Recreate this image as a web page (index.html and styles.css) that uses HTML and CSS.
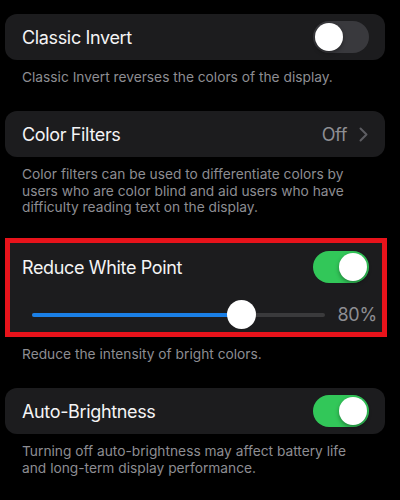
FILE: index.html
```html
<!DOCTYPE html>
<html lang="en">
<head>
    <meta charset="UTF-8">
    <meta name="viewport" content="width=device-width, initial-scale=1.0">
    <title>Display &amp; Text Size</title>
    <link rel="stylesheet" href="styles.css">
</head>
<body>
    <main class="settings">
        <section class="group">
            <div class="cell">
                <span class="cell-title">Classic Invert</span>
                <span class="switch"><span class="knob"></span></span>
            </div>
            <p class="footnote">Classic Invert reverses the colors of the display.</p>
        </section>

        <section class="group">
            <div class="cell">
                <span class="cell-title">Color Filters</span>
                <span class="cell-detail">
                    Off
                    <svg class="chevron" width="9" height="15" viewBox="0 0 9 15">
                        <polyline points="1.5,1.5 7.5,7.5 1.5,13.5" fill="none" stroke="#5d5d62" stroke-width="2" stroke-linecap="round" stroke-linejoin="round"/>
                    </svg>
                </span>
            </div>
            <p class="footnote">Color filters can be used to differentiate colors by users who are color blind and aid users who have difficulty reading text on the display.</p>
        </section>

        <section class="group">
            <div class="cell cell-marked">
                <div class="cell-row">
                    <span class="cell-title">Reduce White Point</span>
                    <span class="switch on"><span class="knob"></span></span>
                </div>
                <div class="slider-row">
                    <div class="slider">
                        <div class="slider-fill" style="width: 71.5%"></div>
                        <span class="slider-thumb" style="left: 71.5%"></span>
                    </div>
                    <span class="slider-value">80%</span>
                </div>
            </div>
            <p class="footnote">Reduce the intensity of bright colors.</p>
        </section>

        <section class="group">
            <div class="cell">
                <span class="cell-title">Auto-Brightness</span>
                <span class="switch on"><span class="knob"></span></span>
            </div>
            <p class="footnote">Turning off auto-brightness may affect battery life and long-term display performance.</p>
        </section>
    </main>
</body>
</html>
```

FILE: styles.css
```css
body {
    margin: 0;
    padding-top: 14px;
    background-color: #000;
    font-family: Inter, "Noto Sans", sans-serif;
    color: #fff;
}

.settings {
    width: 400px;
}

.cell {
    display: flex;
    align-items: center;
    justify-content: space-between;
    height: 46px;
    margin: 0 15px 0 5px;
    padding: 0 16px 0 17px;
    background-color: #1c1c1e;
    border-radius: 12px;
}

.cell-title {
    font-size: 18px;
    letter-spacing: -0.35px;
    color: #f4f4f5;
}

.cell-detail {
    display: flex;
    align-items: center;
    gap: 12px;
    font-size: 18px;
    letter-spacing: -0.35px;
    color: #8e8e93;
    padding-right: 1px;
}

.chevron {
    display: block;
}

.footnote {
    margin: 0 15px 25.5px 5px;
    padding: 9px 17px 0;
    font-size: 13.75px;
    line-height: 16.5px;
    color: #8d8d92;
}

/* highlighted cell with the red frame round it */
.cell-marked {
    display: block;
    height: 89px;
    margin: -3px 13px 0 5px;
    padding: 0;
    border: 5px solid #e8131b;
    border-radius: 0;
}

.cell-row {
    display: flex;
    align-items: center;
    justify-content: space-between;
    height: 48px;
    padding: 0 13px 0 12px;
}

.slider-row {
    display: flex;
    align-items: center;
    height: 41px;
    padding: 6px 5px 0 22px;
    box-sizing: border-box;
}

.slider {
    position: relative;
    flex: 1;
    height: 4px;
    margin-right: 12px;
    background-color: #3a3a3c;
    border-radius: 2px;
}

.slider-fill {
    height: 100%;
    background-color: #1a7fe6;
    border-radius: 2px;
}

.slider-thumb {
    position: absolute;
    top: 50%;
    width: 29px;
    height: 29px;
    margin: -15px 0 0 -14.5px;
    background-color: #fff;
    border-radius: 50%;
}

.slider-value {
    font-size: 18px;
    letter-spacing: -0.2px;
    color: #8e8e93;
}

.switch {
    position: relative;
    display: block;
    width: 56px;
    height: 32px;
    background-color: #39393d;
    border-radius: 16px;
}

.switch .knob {
    position: absolute;
    top: 2px;
    left: 2px;
    width: 28px;
    height: 28px;
    background-color: #fff;
    border-radius: 50%;
    box-shadow: 0 2px 4px rgba(0, 0, 0, 0.35);
}

.switch.on {
    background-color: #32c759;
}

.switch.on .knob {
    left: 26px;
}
```
